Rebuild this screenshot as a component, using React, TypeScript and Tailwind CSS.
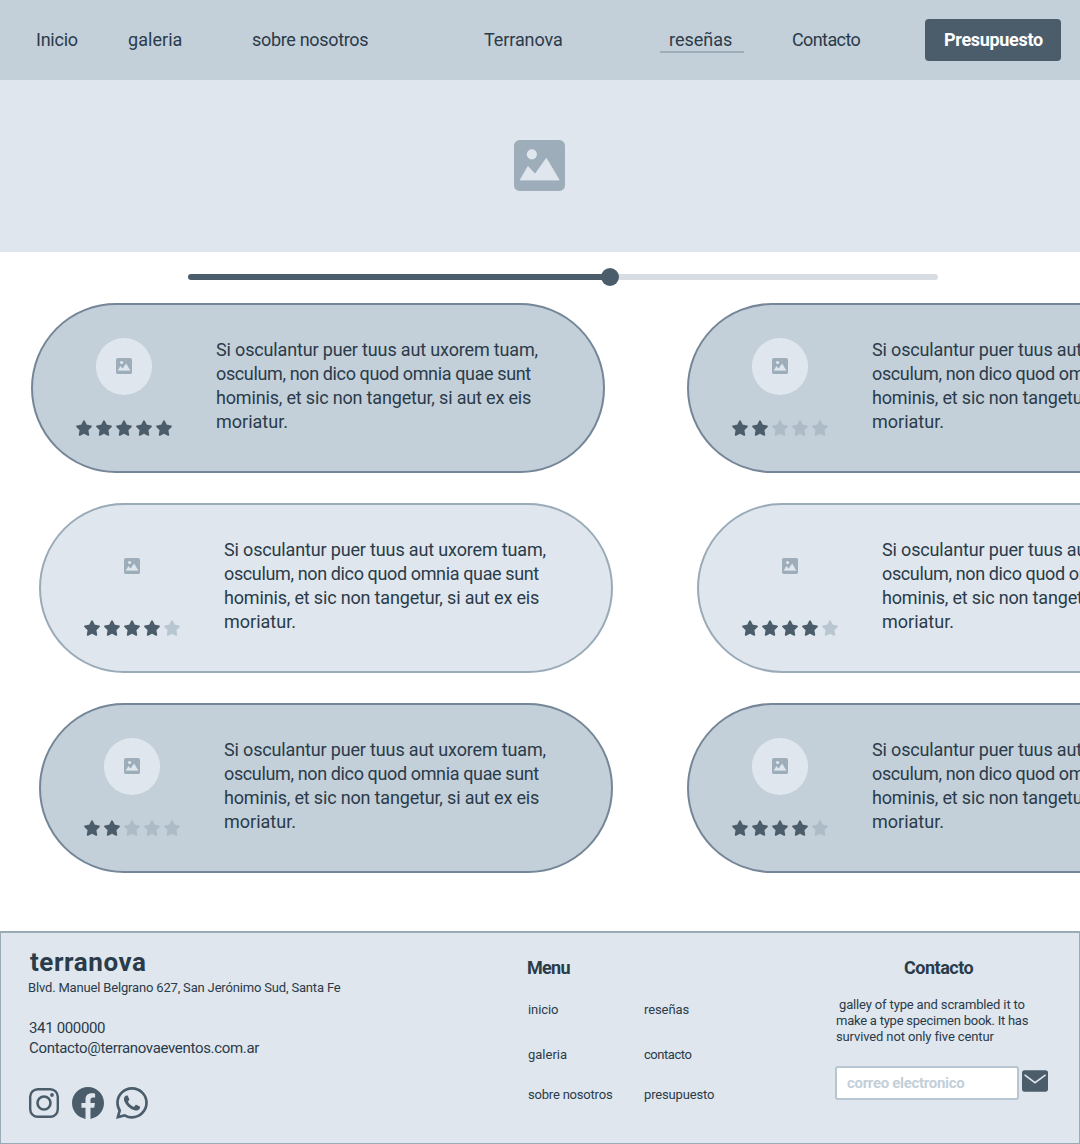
import { BsWhatsapp } from "react-icons/bs";

function ImageGlyph({ className }: { className: string }) {
  return (
    <svg viewBox="0 0 50 50" className={className} aria-hidden="true">
      <rect width="50" height="50" rx="5.5" fill="#9dadba" />
      <circle cx="17.5" cy="14" r="5" fill="#dfe6ee" />
      <path
        d="M6 39.2 13.7 26l7 7.4L31.7 18 44.3 39.2Z"
        fill="#dfe6ee"
        stroke="#dfe6ee"
        strokeWidth="0.8"
        strokeLinejoin="round"
      />
    </svg>
  );
}

function Star({ className }: { className: string }) {
  return (
    <svg viewBox="0 0 16 16" className={`size-4 ${className}`} aria-hidden="true">
      <path
        d="M8 1.2 10.1 5.5 15 6.3 11.5 9.8 12.3 14.9 8 12.7 3.7 14.9 4.5 9.8 1 6.3 5.9 5.5Z"
        fill="currentColor"
        stroke="currentColor"
        strokeWidth="1.8"
        strokeLinejoin="round"
      />
    </svg>
  );
}

type Tone = "dark" | "light";

function Review({ stars, tone }: { stars: number; tone: Tone }) {
  const dark = tone === "dark";
  return (
    <article
      className={`flex h-[170px] w-[574px] shrink-0 rounded-full border-2 pt-[33px] pl-[43px] ${
        dark ? "border-[#748697] bg-[#c3cfd9]" : "border-[#9aabb8] bg-[#dfe6ee]"
      }`}
    >
      <div className="flex w-24 flex-col items-center">
        <div className="mr-[0.5px] flex h-[57px] w-[55.5px] justify-center rounded-full bg-[#dfe6ee] pt-5 pr-[0.5px]">
          <ImageGlyph className="size-4" />
        </div>
        <div className="mt-[25px] flex gap-1">
          {[0, 1, 2, 3, 4].map((i) => (
            <Star
              key={i}
              className={i < stars ? "text-[#4b5d6b]" : dark ? "text-[#adbbc7]" : "text-[#b8c6d1]"}
            />
          ))}
        </div>
      </div>
      <p className="ml-11 text-lg leading-6 whitespace-nowrap">
        <span className="block tracking-[-0.155px]">Si osculantur puer tuus aut uxorem tuam,</span>
        <span className="block tracking-[-0.37px]">osculum, non dico quod omnia quae sunt</span>
        <span className="block tracking-[-0.17px]">hominis, et sic non tangetur, si aut ex eis</span>
        <span className="block">moriatur.</span>
      </p>
    </article>
  );
}

function InstagramIcon() {
  return (
    <svg viewBox="0 0 30 30" className="size-[30px]" fill="none" stroke="#4b5d6b" aria-hidden="true">
      <rect x="1.2" y="1.2" width="27.6" height="27.6" rx="7.6" strokeWidth="2.4" />
      <circle cx="15" cy="15" r="6.5" strokeWidth="2.6" />
      <circle cx="23" cy="7" r="1.9" fill="#4b5d6b" stroke="none" />
    </svg>
  );
}

function FacebookIcon() {
  return (
    <svg viewBox="0 0 24 24" className="size-8" fill="#4b5d6b" aria-hidden="true">
      <path d="M24 12.073c0-6.627-5.373-12-12-12s-12 5.373-12 12c0 5.99 4.388 10.954 10.125 11.854v-8.385H7.078v-3.47h3.047V9.43c0-3.007 1.792-4.669 4.533-4.669 1.312 0 2.686.235 2.686.235v2.953H15.83c-1.491 0-1.956.925-1.956 1.874v2.25h3.328l-.532 3.47h-2.796v8.385C19.612 23.027 24 18.062 24 12.073z" />
    </svg>
  );
}

function MailIcon() {
  return (
    <svg viewBox="0 0 26 22" className="mt-1 h-[22px] w-[26px]" aria-hidden="true">
      <rect y="0.3" width="26" height="21.4" rx="2.6" fill="#4b5d6b" />
      <path d="M2.6 4.9 13 12.7 23.6 4.9" fill="none" stroke="#dfe6ee" strokeWidth="1.5" />
    </svg>
  );
}

export default function App() {
  return (
    <div className="h-[1144px] w-[1080px] overflow-hidden bg-white font-['Roboto',sans-serif] text-[#2a3b49]">
      <header className="flex h-20 items-center bg-[#c3cfd9] pl-9 text-lg leading-6 whitespace-nowrap">
        <a className="w-[92px] tracking-[-0.25px]">Inicio</a>
        <a className="w-[124px] tracking-[0.05px]">galeria</a>
        <a className="w-[232px] tracking-[-0.32px]">sobre nosotros</a>
        <a className="w-44 tracking-[-0.089px]">Terranova</a>
        <a className="h-[26px] w-[84px] border-b-2 border-[#9dadba] pt-px pl-[9px] leading-6">reseñas</a>
        <a className="ml-12 w-[133px] tracking-[-0.605px]">Contacto</a>
        <button className="h-[42px] w-[136px] rounded bg-[#4b5d6b] pl-[19px] text-left font-bold tracking-[-0.31px] text-white">
          Presupuesto
        </button>
      </header>

      <section className="flex h-[172px] justify-center bg-[#dfe6ee] pt-[60px]">
        <ImageGlyph className="mr-px h-[51px] w-[51px]" />
      </section>

      <div className="mt-4 ml-[188px] flex h-[18px] w-[750px] items-center">
        <div className="h-1.5 w-[417px] rounded-l-full bg-[#4b5d6b]" />
        <div className="-ml-1 size-[18px] rounded-full bg-[#4b5d6b]" />
        <div className="h-1.5 flex-1 rounded-r-full bg-[#d8dde4]" />
      </div>

      <main className="mt-[17px] flex flex-col gap-[30px]">
        <div className="flex gap-[82px] pl-[31px]">
          <Review stars={5} tone="dark" />
          <Review stars={2} tone="dark" />
        </div>
        <div className="flex gap-[84px] pl-[39px]">
          <Review stars={4} tone="light" />
          <Review stars={4} tone="light" />
        </div>
        <div className="flex gap-[74px] pl-[39px]">
          <Review stars={2} tone="dark" />
          <Review stars={4} tone="dark" />
        </div>
      </main>

      <footer className="mt-[58px] flex h-[213px] border border-t-2 border-[#9aabb8] bg-[#dfe6ee] whitespace-nowrap">
        <section className="w-[498px] pt-[13px] pl-[27px]">
          <h2 className="pl-0.5 text-[26px] leading-8 font-bold tracking-[0.574px]">terranova</h2>
          <p className="mt-0.5 text-[13px] leading-4 tracking-[-0.17px]">
            Blvd. Manuel Belgrano 627, San Jerónimo Sud, Santa Fe
          </p>
          <p className="mt-[22px] pl-px text-[15px] leading-5 tracking-[-0.34px]">341 000000</p>
          <p className="pl-px text-[15px] leading-5 tracking-[-0.32px]">Contacto@terranovaeventos.com.ar</p>
          <div className="mt-[29px] flex items-center">
            <span className="mr-[13px] ml-px">
              <InstagramIcon />
            </span>
            <FacebookIcon />
            <BsWhatsapp className="ml-3 size-8 text-[#4b5d6b]" />
          </div>
        </section>

        <section className="w-[336px] pt-[23px] pl-7">
          <h3 className="text-lg leading-6 font-bold tracking-[-0.69px]">Menu</h3>
          <div className="mt-[22px] ml-px flex text-[13px] leading-4">
            <ul className="w-[116px]">
              <li className="tracking-[-0.093px]">inicio</li>
              <li className="mt-[29px]">galeria</li>
              <li className="mt-6 tracking-[-0.2px]">sobre nosotros</li>
            </ul>
            <ul>
              <li className="tracking-[-0.1px]">reseñas</li>
              <li className="mt-[29px] tracking-[-0.45px]">contacto</li>
              <li className="mt-6 tracking-[-0.155px]">presupuesto</li>
            </ul>
          </div>
        </section>

        <section className="pt-[23px]">
          <h3 className="pl-[69px] text-lg leading-6 font-bold tracking-[-0.498px]">Contacto</h3>
          <p className="mt-[17px] pl-px text-[13px] leading-4">
            <span className="block pl-[3px] tracking-[-0.15px]">galley of type and scrambled it to</span>
            <span className="block tracking-[-0.24px]">make a type specimen book. It has</span>
            <span className="block tracking-[-0.127px]">survived not only five centur</span>
          </p>
          <div className="mt-[21px] flex">
            <div className="mr-[3px] h-[34px] w-[184px] rounded-[3px] border-2 border-[#b8c6d1] bg-white pl-2.5 text-[15px] leading-[30px] font-bold tracking-[-0.31px] text-[#c3cfd9]">
              correo electronico
            </div>
            <MailIcon />
          </div>
        </section>
      </footer>
    </div>
  );
}
